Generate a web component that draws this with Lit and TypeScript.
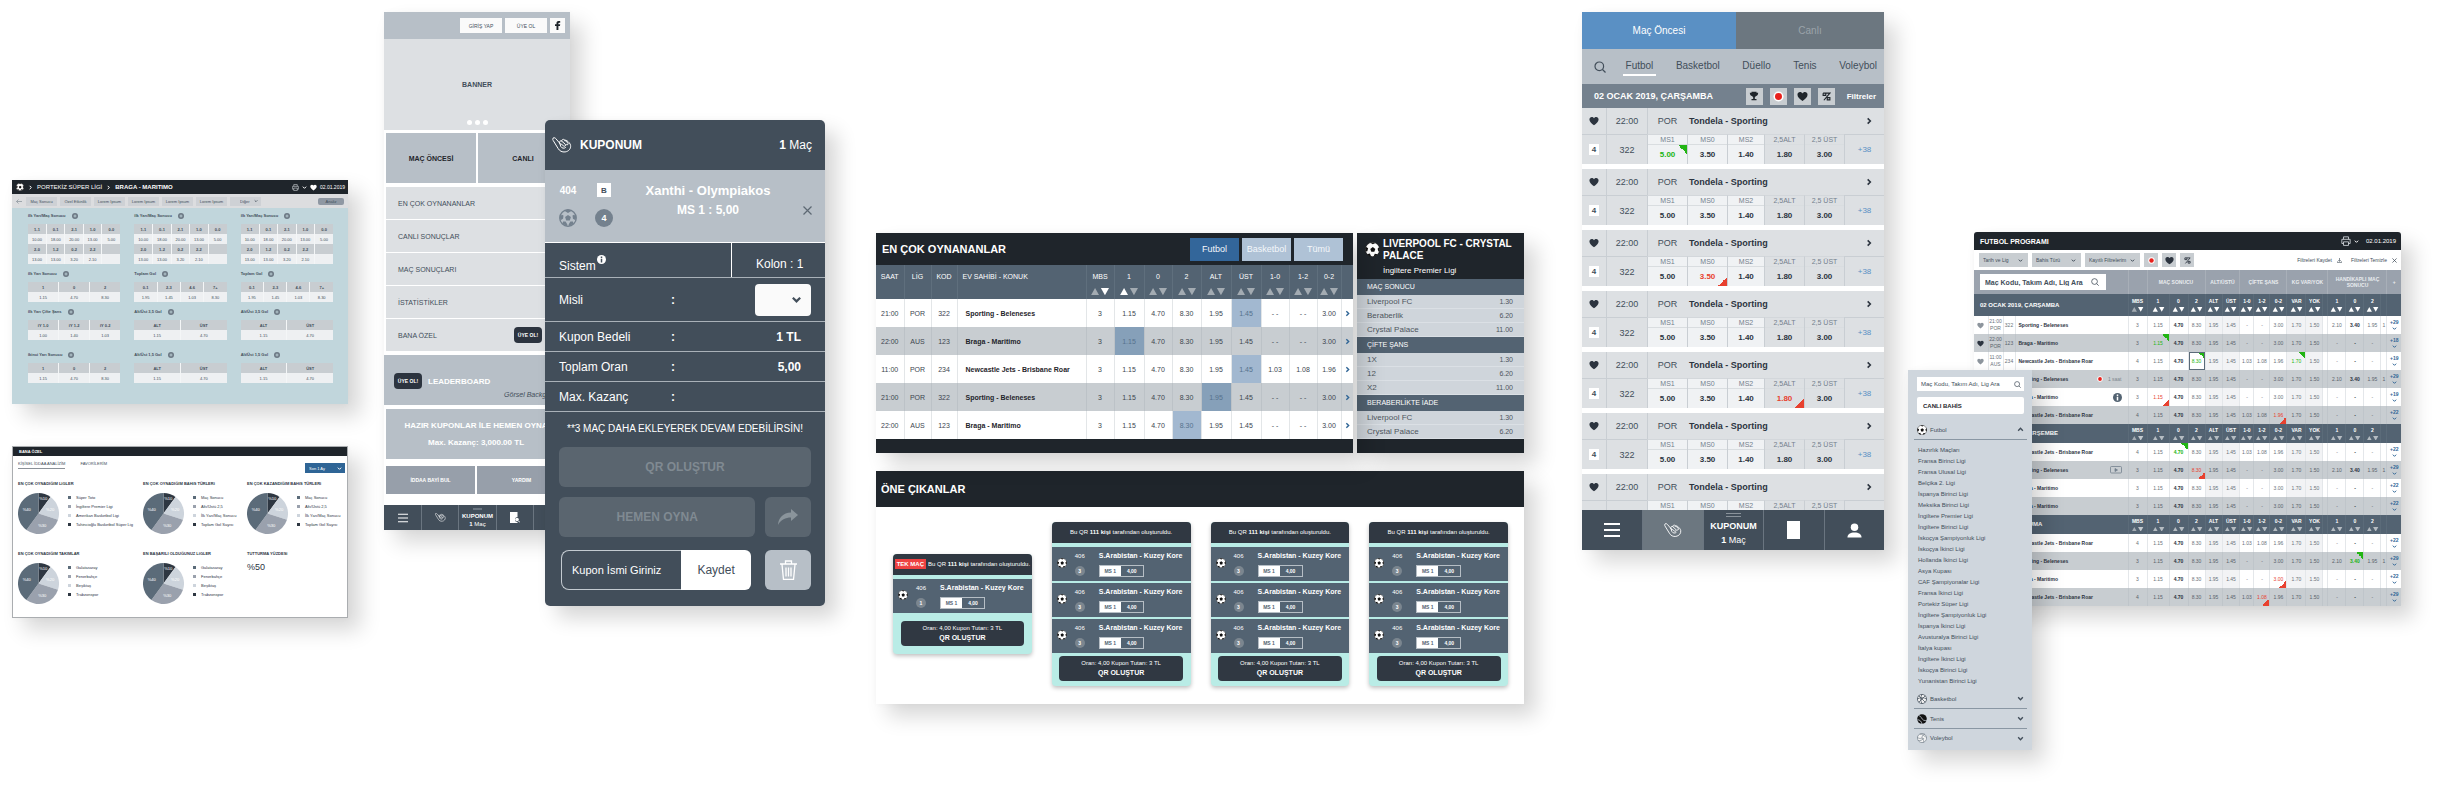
import { LitElement, html, svg, css, nothing } from "lit";
import { customElement, property } from "lit/decorators.js";
import { classMap } from "lit/directives/class-map.js";

const base = css`
  :host {
    --ink: #1f252b;
    --slate: #424e5a;
    --steel: #536372;
    --silver: #b7bfc7;
    --mist: #dde0e3;
    --row: #c8cdd1;
    --blue: #2f6596;
    display: block;
    font-family: "Liberation Sans", Arial, Helvetica, sans-serif;
    color: var(--slate);
  }
  * { box-sizing: border-box; }
  h2, h3, p, ul, dl, dd { margin: 0; padding: 0; font-size: inherit; font-weight: inherit; }
  ul { list-style: none; }
  button, input, select {
    font: inherit; color: inherit; border: 0; margin: 0; padding: 0;
    background: none; border-radius: 0; appearance: none; min-width: 0; outline: 0;
  }
  button { cursor: pointer; text-align: center; }
  input::placeholder { color: inherit; opacity: 1; }
  a { color: inherit; text-decoration: none; }
  svg { display: block; flex: none; }
  table { border-collapse: collapse; table-layout: fixed; width: 100%; }
  th, td { padding: 0; font-weight: 400; text-align: center; }
  .drop { display: grid; align-items: center; }
  .drop > select { grid-area: 1 / 1; width: 100%; height: 100%; }
  .drop > svg { grid-area: 1 / 1; justify-self: end; pointer-events: none; }
`;

const board = css`
  :host { box-shadow: 12px 12px 20px rgba(0, 0, 0, 0.16), 0 0 6px rgba(0, 0, 0, 0.03); }
`;

/* ---------- icons ---------- */

const ball = (size: number) => html`<svg width=${size} height=${size} viewBox="0 0 24 24">
  <circle cx="12" cy="12" r="11.500" fill="#fff" stroke="#111" stroke-width="1"/>
  <path fill="#111" d="M12.500 8l4 3-1.600 4.600h-4.800L8.500 11zM8.500 1.200L12.500 3.400l4-1.900A12 12 0 0 0 8.500 1.200zM22.800 8l-2.600 2.600 1.200 4.400 1.800-.6A12 12 0 0 0 22.800 8zM20.300 19.500l-4.600-.6-2 4.100a12 12 0 0 0 6.600-3.500zM3.200 19.500l4.600-1 2 4.600a12 12 0 0 1-6.600-3.600zM1.300 7.500l3.700 2.400-1.300 4.800-2.600.5A12 12 0 0 1 1.300 7.500z"/>
</svg>`;

const ballGrey = html`<svg width="18" height="18" viewBox="0 0 24 24">
  <circle cx="12" cy="12" r="11" fill="none" stroke="#74818e" stroke-width="1.800"/>
  <path fill="#74818e" d="M12 8l3.900 2.800-1.500 4.500H9.600l-1.500-4.500zM7 2.300l5 3 5-3L14 1h-4zM1 10l3-2.500 2 1-.6 4.600L2 15zM23 10l-3-2.500-2 1 .6 4.600L22 15zM4.500 19.500l1-2.700 3.300-.1 2.400 3.800-.8 2.300zM19.500 19.500l-1-2.700-3.300-.1-2.400 3.800.8 2.300z"/>
</svg>`;

const hand = (w: number) => html`<svg width=${w} height=${w * 0.8} viewBox="0 0 30 24" fill="none" stroke="#fff" stroke-width="1.500" stroke-linecap="round" stroke-linejoin="round">
  <path d="M2 1.500C.600 2.500 1 4 1.700 5.100L9 17c2.200 4 6.200 6 10.700 5.400 5.600-.800 8.800-5 8.200-9.600-.4-3-3-5.400-5.600-7.300-1.700-1.200-3.300-.8-4 .3"/>
  <path d="M2 1.500c1.300-.9 2.700-.3 3.600.8l7.600 8.900"/>
  <path d="M11.300 9c-.7-2 1-3.900 2.900-3.100l5.600 4.900c1.700 1.600-.4 4-2.100 2.800l-3.400-2.700"/>
  <path d="M14.500 6c0-2.300 2.300-3.200 3.900-1.900l5.300 4.700c1.500 1.500-.2 3.700-1.900 2.900M11.500 9l1.700 5.300c1.500 2.700 5 3.300 7 1.600"/>
</svg>`;

const chevron = (dir: "down" | "up" | "right", size: number, width = 2.4) => {
  const d = { down: "M2 4l4 4 4-4", up: "M2 8l4-4 4 4", right: "M4 2l4 4-4 4" }[dir];
  return html`<svg width=${size} height=${size} viewBox="0 0 12 12" fill="none" stroke="currentColor" stroke-width=${width}><path d=${d}/></svg>`;
};

const heart = (size: number) => html`<svg width=${size} height=${size} viewBox="0 0 12 12"><path fill="currentColor" d="M6 11C3 9 .500 6.800.500 4.200.500 2.400 1.800 1.200 3.300 1.200c1.100 0 2.100.6 2.700 1.500.600-.9 1.600-1.500 2.700-1.500 1.500 0 2.800 1.200 2.800 3C11.500 6.800 9 9 6 11z"/></svg>`;

const lens = (size: number) => html`<svg width=${size} height=${size} viewBox="0 0 12 12" fill="none" stroke="currentColor" stroke-width="1.200"><circle cx="5.300" cy="5.300" r="4.300"/><path d="M8.500 8.500l3 3"/></svg>`;

const printer = (size: number) => html`<svg width=${size} height=${size} viewBox="0 0 12 12" fill="none" stroke="#d5dade" stroke-width="1"><path d="M3 4V1h6v3M3 9H1V4h10v5H9M3 7h6v4.300H3z"/></svg>`;

const percent = (size: number) => html`<svg width=${size} height=${size} viewBox="0 0 12 12" fill="none" stroke="currentColor" stroke-width="1.500"><path d="M1.500 1.500h9L2.500 11M1.500 1.500v3h3.500v-3M7 7.500h3.500v3H7z"/></svg>`;

const record = (size: number) => html`<svg width=${size} height=${size} viewBox="0 0 12 12"><circle cx="6" cy="6" r="5.500" fill="#fff"/><circle cx="6" cy="6" r="3.800" fill="#e8201c"/></svg>`;

const trophy = (size: number) => html`<svg width=${size} height=${size} viewBox="0 0 12 12"><path fill="currentColor" d="M3 1h6v1h2c0 2.500-1 3.500-2.600 4L7 7.500V9.500h2V11H3V9.500h2v-2L3.600 6C2 5.500 1 4.500 1 2h2z"/></svg>`;

const burger = (size: number) => html`<svg width=${size} height=${size} viewBox="0 0 16 16" stroke="#fff" stroke-width="1.800"><path d="M0 2h16M0 8h16M0 14h16"/></svg>`;

const person = (size: number) => html`<svg width=${size} height=${size} viewBox="0 0 16 16" fill="#fff"><circle cx="8" cy="4.500" r="4"/><path d="M.500 15.500c0-4 3-5.500 7.500-5.500s7.500 1.500 7.500 5.500z"/></svg>`;

const sorter = (w: number, up: string, down: string) => html`<svg width=${w} height=${w * 0.36} viewBox="0 0 22 8"><path fill=${up} d="M1 8l4.500-8L10 8z"/><path fill=${down} d="M12 0h9l-4.500 8z"/></svg>`;

const plusDot = html`<svg width="6" height="6" viewBox="0 0 12 12"><circle cx="6" cy="6" r="6" fill="#6c7884"/><path d="M6 3v6M3 6h6" stroke="#c1d6dc" stroke-width="1.600"/></svg>`;

/* ---------- match detail: odds markets ---------- */

interface Market { title: string; rows: string[][]; }
const firstHalf: Market = {
  title: "İlk Yarı/Maç Sonucu",
  rows: [["1-1", "0-1", "2-1", "1-0", "0-0"], ["10.00", "18.00", "20.00", "13.00", "5.00"], ["2-0", "1-2", "0-2", "2-2", ""], ["13.00", "13.00", "3.20", "2.10", ""]],
};
const altUst = (n: string): Market => ({ title: `Alt/Üst ${n} Gol`, rows: [["ALT", "ÜST"], ["1.15", "4.70"]] });
const toplam: Market = { title: "Toplam Gol", rows: [["0-1", "2-3", "4-6", "7+"], ["1.95", "1.45", "1.03", "8.30"]] };
const result = (title: string): Market => ({ title, rows: [["1", "0", "2"], ["1.15", "4.70", "8.30"]] });
const markets: Market[] = [
  firstHalf, firstHalf, firstHalf,
  result("İlk Yarı Sonucu"), toplam, toplam,
  { title: "İlk Yarı Çifte Şans", rows: [["İY 1-0", "İY 1-2", "İY 0-2"], ["1.00", "1.40", "1.03"]] }, altUst("3,5"), altUst("3,5"),
  result("İkinci Yarı Sonucu"), altUst("1,5"), altUst("1,5"),
];

@customElement("odds-board")
class OddsBoard extends LitElement {
  static styles = [base, board, css`
    :host { font-size: 4px; background: #c1d6dc; }
    header { display: flex; align-items: center; gap: 4px; height: 14px; padding: 0 3px 0 4px; background: var(--ink); color: #fff; font-size: 6px; }
    header .tools { display: flex; align-items: center; gap: 3px; margin-left: auto; font-size: 5px; }
    nav { display: flex; align-items: center; gap: 3px; height: 14px; padding: 0 4px; background: #dcdddf; }
    nav .tab { flex: 0 1 31px; height: 9px; background: #ced1d5; white-space: nowrap; }
    nav .back { width: 7px; margin-right: 0; color: #8b949c; }
    nav .drop { flex: 0 1 31px; height: 9px; background: #ced1d5; padding-right: 3px; }
    nav .drop select { padding-left: 10px; }
    nav .analyse { width: 26px; height: 7px; margin-left: auto; border-radius: 2px; background: #8f98a3; color: var(--slate); }
    .markets { display: grid; grid-template-columns: repeat(3, minmax(0, 1fr)); grid-template-rows: 58px 38px 43px 33px; column-gap: 14px; padding: 3px 15px 21px 16px; }
    h3 { display: flex; align-items: center; gap: 6px; height: 10px; margin-bottom: 3px; font-weight: 700; line-height: 10px; }
    th, td { height: 10px; line-height: 9px; border-left: 1px solid #f4f6f7; }
    th:first-child, td:first-child { border-left: 0; }
    th { background: var(--row); font-weight: 700; }
    td { background: #eef0f2; }
  `];
  render() {
    return html`
      <header>${ball(8)}${chevron("right", 5)}<span>PORTEKİZ SÜPER LİGİ</span>${chevron("right", 5)}<b>BRAGA - MARITIMO</b>
        <span class="tools">${printer(7)}${chevron("down", 5)}${heart(7)}<span>02.01.2019</span></span></header>
      <nav>
        <button class="back" aria-label="Geri"><svg width="6" height="5" viewBox="0 0 12 10" fill="none" stroke="currentColor" stroke-width="1.500"><path d="M5 1L1 5l4 4M1 5h11"/></svg></button>
        ${["Maç Sonucu", "Özel Etkinlik", "Lorem Ipsum", "Lorem Ipsum", "Lorem Ipsum", "Lorem Ipsum"].map((t) => html`<button class="tab">${t}</button>`)}
        <label class="drop"><select aria-label="Diğer"><option>Diğer</option></select>${chevron("down", 4)}</label>
        <button class="analyse">Analiz</button>
      </nav>
      <div class="markets">${markets.map((m) => html`<section><h3>${m.title}${plusDot}</h3>
        <table>${m.rows.map((r, i) => html`<tr>${r.map((c) => i % 2 ? html`<td>${c}</td>` : html`<th>${c}</th>`)}</tr>`)}</table></section>`)}
      </div>`;
  }
}

/* ---------- personal statistics ---------- */

const shades = ["#5b6b79", "#9aa1ad", "#cdd4dc", "#2e3742"];
const slices = [{ v: 10, c: shades[3] }, { v: 20, c: shades[2] }, { v: 30, c: shades[1] }, { v: 40, c: shades[0] }];

function pie() {
  let at = 0;
  const point = (pct: number, r: number) => {
    const a = (pct / 100) * Math.PI * 2;
    return [Math.sin(a) * r, -Math.cos(a) * r];
  };
  return html`<svg width="41" height="41" viewBox="-50 -50 100 100">${slices.map(({ v, c }) => {
    const [x1, y1] = point(at, 50);
    const [x2, y2] = point(at + v, 50);
    const [tx, ty] = point(at + v / 2, v === 10 ? 38 : 30);
    at += v;
    return svg`<path fill=${c} d="M0 0L${x1} ${y1}A50 50 0 0 1 ${x2} ${y2}z"/><text x=${tx} y=${ty + 4} fill="#fff" font-size="10" text-anchor="middle">%${v}</text>`;
  })}</svg>`;
}

const types = ["Maç Sonucu", "Altı/Üstü 2,5", "İlk Yarı/Maç Sonucu", "Toplam Gol Sayısı"];
const teams = ["Galatasaray", "Fenerbahçe", "Beşiktaş", "Trabzonspor"];
const charts: [string, string[]][] = [
  ["EN ÇOK OYNADIĞIM LİGLER", ["Süper Toto", "İngiltere Premier Ligi", "Amerikan Basketbol Ligi", "Tahincioğlu Basketbol Süper Lig"]],
  ["EN ÇOK OYNADIĞIM BAHİS TÜRLERİ", types],
  ["EN ÇOK KAZANDIĞIM BAHİS TÜRLERİ", types],
  ["EN ÇOK OYNADIĞIM TAKIMLAR", teams],
  ["EN BAŞARILI OLDUĞUNUZ LİGLER", teams],
];

@customElement("stats-board")
class StatsBoard extends LitElement {
  static styles = [base, board, css`
    :host { font-size: 4px; background: #fff; border: 1px solid #aaadb0; }
    header { height: 9px; padding-left: 6px; background: var(--ink); color: #fff; font-weight: 700; line-height: 9px; }
    nav { display: flex; align-items: flex-start; gap: 15px; height: 24px; padding: 4px 2px 0 5px; }
    nav a { line-height: 8px; }
    nav a.on { border-bottom: 1px solid #8b9198; }
    nav .drop { width: 40px; height: 10px; margin: 3px 0 0 auto; padding-right: 3px; background: var(--blue); color: #fff; }
    nav .drop select { padding-left: 4px; }
    .charts { display: grid; grid-template-columns: 125fr 104fr 100fr; grid-template-rows: 70px 67px; padding-left: 5px; color: #2c343f; }
    h3 { line-height: 8px; margin-bottom: 5px; font-weight: 700; white-space: nowrap; }
    .chart { display: flex; gap: 9px; }
    li { display: flex; align-items: center; gap: 5px; height: 9px; line-height: 9px; white-space: nowrap; }
    li i { width: 3px; height: 3px; }
    .rate { font-size: 9px; line-height: 9px; }
  `];
  render() {
    return html`
      <header>BANA ÖZEL</header>
      <nav><a class="on" href="#analiz">KİŞİSEL İDDAA ANALİZİM</a><a href="#favori">FAVORİLERİM</a>
        <label class="drop"><select aria-label="Dönem"><option>Son 1 Ay</option></select>${chevron("down", 5)}</label></nav>
      <div class="charts">
        ${charts.map(([title, items]) => html`<section><h3>${title}</h3><div class="chart">${pie()}
          <ul>${items.map((t, i) => html`<li><i style="background:${shades[i]}"></i>${t}</li>`)}</ul></div></section>`)}
        <section><h3>TUTTURMA YÜZDESİ</h3><p class="rate">%50</p></section>
      </div>`;
  }
}

/* ---------- bottom navigation of the phone screens ---------- */

@customElement("tab-dock")
class TabDock extends LitElement {
  @property({ type: Boolean, reflect: true }) large = false;
  static styles = [base, css`
    nav { display: grid; grid-template-columns: repeat(5, minmax(0, 1fr)); height: 25px; background: var(--slate); color: #fff; font-size: 6px; line-height: 8px; }
    a { display: flex; flex-direction: column; align-items: center; justify-content: center; border-left: 1px solid #6a7580; }
    a:first-child { border-left: 0; }
    .grip { width: 9px; height: 2px; margin-bottom: 2px; background: #6a7580; }
    :host([large]) nav { height: 40px; font-size: 9px; line-height: 14px; }
    :host([large]) .play { background: #6c7780; }
    :host([large]) .grip { width: 15px; height: 4px; margin-bottom: 2px; background: none; border: solid #8a939b; border-width: 1px 0; }
  `];
  render() {
    const k = this.large;
    return html`<nav>
      <a href="#menu" aria-label="Menü">${burger(k ? 16 : 10)}</a>
      <a href="#oyna" class="play" aria-label="Oyna">${hand(k ? 18 : 11)}</a>
      <a href="#kupon"><span class="grip"></span><b>KUPONUM</b><span><b>1</b> Maç</span></a>
      <a href="#kuponlar" aria-label="Kuponlar">${k
        ? html`<svg width="13" height="18" viewBox="0 0 13 18"><path fill="#fff" d="M0 0h13v18H0z"/></svg>`
        : html`<svg width="10" height="11" viewBox="0 0 10 11"><path fill="#fff" d="M0 0h7.500v5a2.500 2.500 0 0 0 0 5v1H0z"/><circle cx="7" cy="7.500" r="1.800" fill="#fff"/><path d="M8.200 8.700L10 10.500" stroke="#fff"/></svg>`}</a>
      <a href="#hesap" aria-label="Hesap">${person(k ? 15 : 9)}</a></nav>`;
  }
}

/* ---------- phone home screen ---------- */

@customElement("home-board")
class HomeBoard extends LitElement {
  static styles = [base, board, css`
    :host { background: #fff; font-size: 7px; }
    header { display: flex; justify-content: flex-end; align-items: center; gap: 3px; height: 27px; padding-right: 5px; background: var(--silver); font-size: 5px; }
    header button { width: 42px; height: 15px; background: #fafafa; }
    header .fb { display: grid; place-items: center; width: 15px; color: var(--ink); }
    .banner { display: grid; grid-template-rows: 1fr auto; justify-items: center; align-items: center; height: 91px; padding: 10px 0 5px; background: var(--mist); font-weight: 700; }
    .dots { display: flex; gap: 3px; }
    .dots i { width: 5px; height: 5px; border-radius: 50%; background: #fff; }
    .pair { display: grid; grid-template-columns: 1fr 1fr; gap: 2px; padding: 3px 2px 0; }
    .pair button { height: 50px; background: var(--silver); font-weight: 700; color: var(--ink); }
    .list { display: grid; gap: 1px; padding: 4px 2px; }
    .list a { display: flex; justify-content: space-between; align-items: center; height: 32px; padding: 0 26px 0 12px; background: var(--mist); }
    .pill { display: grid; place-items: center; width: 28px; height: 16px; border-radius: 4px; background: #2c343f; color: #fff; font-size: 5px; font-weight: 700; }
    .leader { display: grid; grid-template-columns: auto 1fr; align-content: end; align-items: center; column-gap: 6px; height: 50px; padding: 0 6px 4px 10px; background: var(--silver); color: #fff; }
    .leader b { font-size: 8px; }
    .leader em { grid-column: 1 / 3; justify-self: end; line-height: 12px; color: var(--slate); }
    .ready { display: grid; place-content: center; justify-items: center; gap: 5px; height: 50px; margin: 4px 4px 4px 2px; background: var(--silver); color: #fff; font-size: 8px; font-weight: 700; line-height: 12px; white-space: nowrap; }
    .links { padding: 3px 4px 11px 2px; }
    .links button { height: 28px; background: #979faa; color: #fff; font-size: 5px; }
  `];
  render() {
    return html`
      <header><button>GİRİŞ YAP</button><button>ÜYE OL</button><button class="fb" aria-label="Facebook"><svg width="6" height="9" viewBox="0 0 6 9"><path fill="currentColor" d="M1.500 9V5H0V3.300h1.500V2C1.500.7 2.300 0 3.600 0H5.200v1.700H4.100c-.5 0-.7.2-.7.7v.9h1.800L5 5H3.400v4z"/></svg></button></header>
      <div class="banner"><span>BANNER</span><span class="dots"><i></i><i></i><i></i></span></div>
      <div class="pair"><button>MAÇ ÖNCESİ</button><button>CANLI</button></div>
      <nav class="list">${["EN ÇOK OYNANANLAR", "CANLI SONUÇLAR", "MAÇ SONUÇLARI", "İSTATİSTİKLER", "BANA ÖZEL"].map((t, i) => html`<a href="#liste">${t}${i === 4 ? html`<span class="pill">ÜYE OL!</span>` : nothing}</a>`)}</nav>
      <div class="leader"><span class="pill">ÜYE OL!</span><b>LEADERBOARD</b><em>Görsel Background</em></div>
      <div class="ready"><span>HAZIR KUPONLAR İLE HEMEN OYNA</span><span>Max. Kazanç: 3,000.00 TL</span></div>
      <div class="pair links"><button>İDDAA BAYİ BUL</button><button>YARDIM</button></div>
      <tab-dock></tab-dock>`;
  }
}

/* ---------- coupon ---------- */

@customElement("coupon-board")
class CouponBoard extends LitElement {
  static styles = [base, board, css`
    :host { background: var(--slate); color: #fff; font-size: 12px; border-radius: 5px; }
    header { display: flex; align-items: center; gap: 8px; height: 50px; padding: 0 13px 0 7px; }
    header span { margin-left: auto; }
    .pick { display: grid; grid-template-columns: 18px 18px 1fr 9px; column-gap: 18px; grid-template-rows: 28px 28px; align-items: center; justify-items: center; height: 72px; padding: 6px 13px 0 14px; background: var(--silver); font-weight: 700; }
    .code { font-size: 10px; }
    .bank { display: grid; place-items: center; width: 14px; height: 14px; background: #fff; color: var(--slate); font-size: 8px; }
    .mbs { grid-area: 2 / 2; display: grid; place-items: center; width: 18px; height: 18px; border-radius: 50%; background: #74818e; font-size: 9px; }
    .game { grid-area: 1 / 3; font-size: 13px; white-space: nowrap; }
    .odd { grid-area: 2 / 3; align-self: start; line-height: 12px; }
    .pick > svg { grid-area: 2 / 1; }
    .pick button { grid-area: 2 / 4; align-self: start; padding-top: 2px; }
    .line { display: grid; grid-template-columns: 112px 1fr auto; align-items: center; height: 30px; padding: 0 24px 0 14px; border-top: 1px solid #a9b1b8; }
    .line.system { height: 35px; padding-right: 0; grid-template-columns: 1fr 94px; grid-template-rows: 34px; border-color: #fff; }
    .system span { display: flex; gap: 1px; align-items: center; padding-top: 12px; }
    .system svg { margin-top: -14px; }
    .system p { height: 34px; padding-left: 24px; border-left: 1px solid #fff; line-height: 42px; }
    .line.times { height: 44px; padding-right: 14px; }
    .drop { width: 56px; height: 32px; padding-right: 9px; border-radius: 4px; background: #fafafa; color: var(--slate); }
    .note { padding: 9px 0 10px; border-top: 1px solid #a9b1b8; text-align: center; font-size: 10px; line-height: 16px; }
    .acts { display: grid; grid-template-columns: 189fr 53fr; gap: 10px; padding: 0 14px 16px; }
    .acts button { display: grid; place-items: center; height: 40px; border-radius: 6px; background: #5a656f; color: #808a92; font-weight: 700; }
    .wide { grid-column: 1 / 3; }
    .save { display: flex; height: 40px; margin: 3px 4px 0 2px; }
    .save input { flex: 111; padding-left: 10px; border: 1px solid #c3cad0; border-right: 0; border-radius: 8px 0 0 8px; font-size: 11px; }
    .acts .save button { display: block; flex: 72; border-radius: 0 6px 6px 0; background: #fff; color: var(--slate); font-weight: 400; }
    .acts .bin { margin-top: 3px; background: var(--silver); }
  `];
  render() {
    return html`
      <header>${hand(20)}<b>KUPONUM</b><span><b>1</b> Maç</span></header>
      <div class="pick"><span class="code">404</span><span class="bank">B</span><span class="game">Xanthi - Olympiakos</span>
        ${ballGrey}<span class="mbs">4</span><span class="odd">MS 1 : 5,00</span>
        <button aria-label="Sil"><svg width="9" height="9" viewBox="0 0 9 9" stroke="#5d6873" stroke-width="1.200"><path d="M.500.500l8 8M8.500.500l-8 8"/></svg></button></div>
      <div class="line system"><span>Sistem<svg width="9" height="9" viewBox="0 0 12 12"><circle cx="6" cy="6" r="6" fill="#fff"/><path d="M6 2v2M6 5v5" stroke="#424e5a" stroke-width="2"/></svg></span><p>Kolon : 1</p></div>
      <div class="line times"><label for="misli">Misli</label><b>:</b><span class="drop"><select id="misli"><option></option></select>${chevron("down", 11)}</span></div>
      <div class="line"><span>Kupon Bedeli</span><b>:</b><b>1 TL</b></div>
      <div class="line"><span>Toplam Oran</span><b>:</b><b>5,00</b></div>
      <div class="line"><span>Max. Kazanç</span><b>:</b></div>
      <p class="note">**3 MAÇ DAHA EKLEYEREK DEVAM EDEBİLİRSİN!</p>
      <div class="acts">
        <button class="wide">QR OLUŞTUR</button>
        <button>HEMEN OYNA</button>
        <button aria-label="Paylaş"><svg width="20" height="16" viewBox="0 0 20 16"><path fill="#8a949b" d="M13 0l7 6-7 6V8.500C7.500 8.500 3 10.500 0 16 .500 8.500 5 4 13 3.500z"/></svg></button>
        <div class="save"><input aria-label="Kupon İsmi" placeholder="Kupon İsmi Giriniz"><button>Kaydet</button></div>
        <button class="bin" aria-label="Kuponu sil"><svg width="17" height="20" viewBox="0 0 17 20" fill="none" stroke="#fff" stroke-width="1.300"><path d="M0 4h17M5.500 3.500V1h6v2.500M2 4.500l1.500 15h10L15 4.500M6 7.500v9M8.500 7.500v9M11 7.500v9"/></svg></button>
      </div>`;
  }
}

/* ---------- most played ---------- */

const playedHeads = ["SAAT", "LİG", "KOD", "EV SAHİBİ - KONUK", "MBS", "1", "0", "2", "ALT", "ÜST", "1-0", "1-2", "0-2", ""];
const playedWidths = [28, 27, 26, 129, 28, 30, 28, 29, 30, 30, 28, 28, 24, 12];
const noDc = ["- -", "- -", "3.00"];
const played: { cells: string[]; hot: Record<number, string> }[] = [
  { cells: ["21:00", "POR", "322", "Sporting - Beleneses", "3", "1.15", "4.70", "8.30", "1.95", "1.45", ...noDc], hot: { 9: "soft" } },
  { cells: ["22:00", "AUS", "123", "Braga - Maritimo", "3", "1.15", "4.70", "8.30", "1.95", "1.45", ...noDc], hot: { 5: "deep" } },
  { cells: ["11:00", "POR", "234", "Newcastle Jets - Brisbane Roar", "3", "1.15", "4.70", "8.30", "1.95", "1.45", "1.03", "1.08", "1.96"], hot: { 9: "soft" } },
  { cells: ["21:00", "POR", "322", "Sporting - Beleneses", "3", "1.15", "4.70", "8.30", "1.95", "1.45", ...noDc], hot: { 8: "deep" } },
  { cells: ["22:00", "AUS", "123", "Braga - Maritimo", "3", "1.15", "4.70", "8.30", "1.95", "1.45", ...noDc], hot: { 7: "soft" } },
];
const sideGroups: [string, [string, string][]][] = [
  ["MAÇ SONUCU", [["Liverpool FC", "1.30"], ["Beraberlik", "6.20"], ["Crystal Palace", "11.00"]]],
  ["ÇİFTE ŞANS", [["1X", "1.30"], ["12", "6.20"], ["X2", "11.00"]]],
  ["BERABERLİKTE İADE", [["Liverpool FC", "1.30"], ["Crystal Palace", "6.20"]]],
];

@customElement("played-board")
class PlayedBoard extends LitElement {
  static styles = [base, css`
    :host { display: flex; gap: 4px; font-size: 7px; }
    section, aside { box-shadow: 12px 12px 20px rgba(0, 0, 0, 0.16), 0 0 6px rgba(0, 0, 0, 0.03); }
    section { flex: 477 1 0; min-width: 0; padding-bottom: 14px; background: var(--ink); position: relative; }
    aside { flex: 167 1 0; min-width: 0; padding-bottom: 14px; background: var(--ink); }
    header { display: flex; align-items: center; gap: 3px; height: 32px; padding: 0 10px 0 6px; color: #fff; }
    h2 { margin-right: auto; font-size: 11px; font-weight: 700; }
    header button { width: 49px; height: 23px; background: #afc2d6; color: #f4f7fa; font-size: 9px; }
    header button.on { background: #33669a; }
    th { height: 34px; padding-top: 6px; vertical-align: top; background: var(--steel); color: #fff; border-left: 1px solid #5f6f7d; line-height: 12px; }
    th svg { margin: 5px auto 0; }
    td { height: 28px; background: #fff; border-left: 1px solid #e3e6e8; color: #3d464f; }
    tr:nth-child(even) td { background: var(--row); border-left-color: #bcc2c7; }
    .name { text-align: left; padding-left: 8px; color: var(--ink); white-space: nowrap; }
    th.name { padding-left: 5px; color: #fff; }
    td.name { font-weight: 700; }
    th:first-child, td:first-child { border-left: 0; }
    tr td.deep, tr:nth-child(even) td.deep { background: #86a0b9; color: #56728d; }
    tr td.soft { background: #a2b8d0; color: #56728d; }
    .go { color: var(--blue); }
    .go svg { margin: auto; }
    .top { display: grid; grid-template-columns: 15px 1fr; column-gap: 3px; height: 46px; padding: 5px 0 0 8px; color: #fff; }
    .top > svg { margin-top: 4px; }
    .top b { font-size: 10px; line-height: 12px; }
    .top p { grid-column: 2; font-size: 8px; line-height: 12px; }
    h3 { height: 16px; padding-left: 10px; background: var(--steel); color: #fff; line-height: 16px; }
    .bet { display: flex; justify-content: space-between; align-items: center; height: 14px; padding: 0 11px 0 10px; border-bottom: 1px solid #dbe0e5; background: #cfd5db; color: #4e565e; font-size: 8px; }
    .bet span { font-size: 7px; }
  `];
  render() {
    const total = playedWidths.reduce((a, b) => a + b);
    return html`
      <section>
        <header><h2>EN ÇOK OYNANANLAR</h2><button class="on">Futbol</button><button>Basketbol</button><button>Tümü</button></header>
        <table>
          <colgroup>${playedWidths.map((w) => html`<col style="width:${(w / total) * 100}%">`)}</colgroup>
          <thead><tr>${playedHeads.map((h, i) => html`<th class=${classMap({ name: i === 3 })}>${h}${i > 3 && h ? sorter(20, i === 5 ? "#fff" : "#a3abb2", i === 4 ? "#fff" : "#a3abb2") : nothing}</th>`)}</tr></thead>
          <tbody>${played.map((r) => html`<tr>${r.cells.map((c, i) => html`<td class="${i === 3 ? "name" : ""} ${r.hot[i] ?? ""}">${c}</td>`)}<td class="go">${chevron("right", 7)}</td></tr>`)}</tbody>
        </table>
      </section>
      <aside>
        <div class="top">${ball(15)}<b>LIVERPOOL FC - CRYSTAL PALACE</b><p>İngiltere Premier Ligi</p></div>
        ${sideGroups.map(([t, rows]) => html`<h3>${t}</h3>${rows.map(([n, v]) => html`<div class="bet">${n}<span>${v}</span></div>`)}`)}
      </aside>`;
  }
}

/* ---------- featured coupons ---------- */

@customElement("featured-board")
class FeaturedBoard extends LitElement {
  static styles = [base, board, css`
    :host { background: #fff; font-size: 6px; }
    header { height: 36px; padding-left: 5px; background: var(--ink); color: #fff; font-size: 11px; font-weight: 700; line-height: 36px; }
    .cards { display: grid; grid-template-columns: repeat(4, minmax(0, 1fr)); align-items: center; column-gap: 20px; height: 197px; padding: 0 16px 4px 17px; }
    article { border-radius: 4px; overflow: hidden; background: #b9ece6; color: #fff; box-shadow: 0 2px 4px rgba(0, 0, 0, 0.25); }
    h3 { display: flex; justify-content: center; align-items: center; gap: 2px; height: 21px; margin-bottom: 4px; background: #303842; white-space: nowrap; }
    h3 mark { padding: 2px; background: #ee4141; color: #fff; font-weight: 700; }
    .game { display: grid; grid-template-columns: 12px 24px 1fr; grid-template-rows: 16px 14px; align-items: center; justify-items: center; height: 34px; margin-bottom: 2px; padding: 1px 0 3px 4px; background: var(--steel); }
    .game > svg { grid-area: 1 / 1 / 3 / 2; }
    .mbs { grid-area: 2 / 2; display: grid; place-items: center; width: 10px; height: 10px; border-radius: 50%; background: #7b868f; font-size: 5px; font-weight: 700; }
    .name { justify-self: start; padding-left: 7px; font-size: 7px; font-weight: 700; white-space: nowrap; }
    .chip { grid-area: 2 / 3; justify-self: start; display: grid; grid-template-columns: 21px 22px; height: 12px; margin-left: 7px; border: 1px solid #b6bec5; font-size: 5px; font-weight: 700; line-height: 10px; text-align: center; }
    .chip b { background: #fff; color: var(--steel); }
    article button { display: block; width: calc(100% - 15px); height: 25px; margin: 3px auto 5px; border-radius: 4px; background: #303842; line-height: 9px; white-space: nowrap; }
    article button b { display: block; font-size: 7px; }
    .single button { margin: 8px auto; }
  `];
  render() {
    const card = (n: number) => html`<article class=${classMap({ single: n === 1 })}>
      <h3>${n === 1 ? html`<mark>TEK MAÇ</mark>` : nothing}<span>Bu QR <b>111 kişi</b> tarafından oluşturuldu.</span></h3>
      ${Array.from({ length: n }, () => html`<div class="game">${ball(10)}<span>406</span><span class="name">S.Arabistan - Kuzey Kore</span><span class="mbs">${n}</span><span class="chip"><b>MS 1</b><span>4,00</span></span></div>`)}
      <button>Oran: 4,00 Kupon Tutarı: 3 TL<b>QR OLUŞTUR</b></button></article>`;
    return html`<header>ÖNE ÇIKANLAR</header><div class="cards">${[1, 3, 3, 3].map(card)}</div>`;
  }
}

/* ---------- phone match list ---------- */

const marks: Record<number, [number, string]> = { 0: [0, "up"], 2: [1, "down"], 4: [3, "down"] };
const bets = [["MS1", "5.00"], ["MS0", "3.50"], ["MS2", "1.40"], ["2,5ALT", "1.80"], ["2,5 ÜST", "3.00"]];
const fullRows = 6;

@customElement("matches-board")
class MatchesBoard extends LitElement {
  static styles = [base, board, css`
    :host { background: #fff; font-size: 9px; }
    .modes { display: grid; grid-template-columns: 154fr 148fr; height: 37px; font-size: 10px; }
    .modes button { background: #6c7780; color: #9ba3aa; }
    .modes .on { background: #5a90c4; color: #fff; }
    .sports { display: flex; justify-content: space-between; align-items: center; height: 35px; padding: 0 4px 0 12px; background: var(--silver); font-size: 10px; }
    .sports a { padding: 0 3px; line-height: 17px; border-bottom: 2px solid transparent; }
    .sports .on { border-color: #fff; }
    .date { display: flex; align-items: center; gap: 7px; height: 24px; padding: 0 8px 0 12px; background: #74818e; color: #fff; }
    .date b { margin-right: auto; }
    .date button { display: grid; place-items: center; width: 17px; height: 17px; background: var(--row); color: var(--ink); }
    .date a { padding-left: 5px; font-size: 8px; font-weight: 700; }
    .match { display: grid; grid-template-columns: 24fr 41fr 40fr 40fr 37fr 40fr 40fr 40fr; grid-template-rows: 26px 30px; margin-bottom: 5px; background: var(--mist); }
    .match.peek { grid-template-rows: 26px 10px; margin: 0; }
    .match > * { display: grid; place-items: center; min-width: 0; border-left: 1px solid #c9ced3; }
    .match > :nth-child(1), .match > .mbs { border-left: 0; }
    .match .game { grid-column: 4 / 8; justify-content: start; border: 0; padding-left: 2px; color: #2c343f; font-weight: 700; }
    .match .go { border: 0; justify-content: end; padding-right: 11px; color: #2c343f; }
    .heart { color: #2c343f; }
    .mbs b { padding: 0 3px; background: #fff; font-size: 8px; line-height: 11px; }
    .match .bet { grid-template-rows: 9px 20px; place-items: stretch; border-top: 1px solid #d3d7db; text-align: center; font-size: 7px; line-height: 9px; color: #74818e; }
    .match.peek .bet { grid-template-rows: 9px; }
    .bet b { border-top: 1px solid #d9dde0; color: #2c343f; font-size: 8px; line-height: 19px; }
    .main { background: #f0f2f4; }
    .bet .up { color: #22b514; background: linear-gradient(to top right, transparent 50%, #22b514 50%) top right / 9px 9px no-repeat; }
    .bet .down { color: #e8412f; background: linear-gradient(to bottom right, transparent 50%, #e8412f 50%) bottom right / 9px 9px no-repeat; }
    .more { color: #5a90c4; font-size: 8px; }
    .mbs, .code, .more { border-top: 1px solid #c9ced3; }
  `];
  private match(r: number) {
    const full = r < fullRows;
    return html`<div class=${classMap({ match: true, peek: !full })}>
      <span class="heart">${heart(10)}</span><span>22:00</span><span>POR</span><span class="game">Tondela - Sporting</span><span class="go">${chevron("right", 8)}</span>
      <span class="mbs">${full ? html`<b>4</b>` : nothing}</span><span class="code">${full ? "322" : nothing}</span>
      ${bets.map(([n, v], i) => html`<span class="bet ${i < 3 ? "main" : ""}"><span>${n}</span>${full ? html`<b class=${marks[r]?.[0] === i ? marks[r][1] : ""}>${v}</b>` : nothing}</span>`)}
      <a class="more" href="#oranlar">${full ? "+38" : nothing}</a></div>`;
  }
  render() {
    return html`
      <div class="modes"><button class="on">Maç Öncesi</button><button>Canlı</button></div>
      <nav class="sports">${lens(12)}${["Futbol", "Basketbol", "Düello", "Tenis", "Voleybol"].map((t, i) => html`<a href="#spor" class=${i ? "" : "on"}>${t}</a>`)}</nav>
      <div class="date"><b>02 OCAK 2019, ÇARŞAMBA</b><button aria-label="Kupa">${trophy(10)}</button><button aria-label="Canlı">${record(11)}</button><button aria-label="Favoriler">${heart(11)}</button><button aria-label="Oran">${percent(9)}</button><a href="#filtre">Filtreler</a></div>
      ${Array.from({ length: fullRows + 1 }, (_, r) => this.match(r))}
      <tab-dock large></tab-dock>`;
  }
}

/* ---------- desktop football programme ---------- */

const progWidths = [14, 15, 12, 113, 19, 22, 19, 17, 17, 18, 14, 16, 17, 19, 17, 5, 18, 18, 17, 6, 14];
const progCols = ["1", "0", "2", "ALT", "ÜST", "1-0", "1-2", "0-2", "VAR", "YOK", "", "1", "0", "2", ""];
const head = ["1.15", "4.70", "8.30", "1.95", "1.45"];
const kinds: Record<string, { name: string; odds: string[] }> = {
  S: { name: "Sporting - Beleneses", odds: [...head, "-", "-", "3.00", "1.70", "1.50", "", "2.10", "3.40", "1.95", "1"] },
  M: { name: "Braga - Maritimo", odds: [...head, "-", "-", "3.00", "1.70", "1.50", "", "-", "-", "-", ""] },
  N: { name: "Newcastle Jets - Brisbane Roar", odds: [...head, "1.03", "1.08", "1.96", "1.70", "1.50", "", "-", "-", "-", ""] },
};
interface Fixture { k: string; time: string; lig: string; code: string; more: string; mark?: Record<number, string>; fav?: boolean; extra?: string; }
const fx = (k: string, time: string, lig: string, code: string, more: string, mark: Record<number, string> = {}, extra = "", fav = false): Fixture => ({ k, time, lig, code, more, mark, extra, fav });
const days: { date: string; rows: Fixture[] }[] = [
  { date: "02 OCAK 2019, ÇARŞAMBA", rows: [
    fx("S", "21:00", "POR", "322", "+29"), fx("M", "22:00", "POR", "123", "+18", { 0: "up" }, "", true),
    fx("N", "11:00", "AUS", "234", "+19", { 2: "up box", 8: "up" }), fx("S", "21:00", "POR", "322", "+29", {}, "live"),
    fx("M", "22:00", "POR", "123", "+19", { 0: "down" }, "info"), fx("N", "11:00", "AUS", "234", "+22", { 7: "down" }),
  ] },
  { date: "03 OCAK 2019, PERŞEMBE", rows: [
    fx("N", "11:00", "AUS", "234", "+22", { 1: "up" }), fx("S", "21:00", "POR", "322", "+29", { 2: "down" }, "tv"),
    fx("M", "22:00", "POR", "123", "+22"), fx("M", "22:00", "POR", "123", "+22"),
  ] },
  { date: "04 OCAK 2019, CUMA", rows: [
    fx("N", "11:00", "AUS", "234", "+22"), fx("S", "21:00", "POR", "322", "+29", { 12: "up" }),
    fx("M", "22:00", "POR", "123", "+22", { 7: "down" }), fx("N", "11:00", "AUS", "234", "+29", { 6: "down" }),
  ] },
];

@customElement("program-board")
class ProgramBoard extends LitElement {
  static styles = [base, board, css`
    :host { background: #fff; font-size: 5px; border-radius: 3px; }
    header { display: flex; align-items: center; gap: 3px; height: 18px; padding: 0 5px 0 6px; border-radius: 3px 3px 0 0; background: var(--ink); color: #fff; font-size: 6px; }
    h2 { margin-right: auto; font-size: 7px; font-weight: 700; }
    header span { padding-left: 4px; }
    .filters { display: flex; align-items: center; gap: 4px; height: 20px; padding: 0 4px 0 5px; }
    .filters .drop { flex: 0 1 49px; height: 14px; padding-right: 5px; background: var(--row); }
    .filters .drop.wide { flex-basis: 55px; }
    .filters select { padding-left: 4px; }
    .filters button { display: grid; place-items: center; width: 14px; height: 14px; background: var(--row); color: #2c343f; }
    .filters a { display: flex; align-items: center; gap: 5px; margin-left: 5px; }
    .filters a.first { margin-left: auto; }
    .find { display: flex; align-items: center; width: 126px; height: 16px; margin-left: 6px; padding: 0 7px 0 5px; background: #fff; color: var(--slate); font-size: 7px; }
    .find input { flex: 1; text-align: left; }
    .groups th { height: 24px; background: #9aa2ad; color: #e9ecef; font-weight: 700; line-height: 6px; border-left: 1px solid #a8afb8; }
    .groups th:first-child { border: 0; }
    .day th { height: 19px; background: var(--steel); color: #fff; font-weight: 700; line-height: 7px; border-left: 1px solid #5b6b79; }
    .day th.date { padding-left: 6px; border: 0; text-align: left; font-size: 6px; }
    .day.first th { height: 22px; }
    .day svg { margin: 2px auto 0; }
    td { height: 18px; line-height: 7px; background: #fff; border-left: 1px solid #e4e7ea; color: #6a727a; overflow: hidden; }
    td:first-child { border: 0; color: #8d959d; }
    td:first-child svg { margin: auto; }
    .pale { background: #f2f3f5; }
    .alt td { background: var(--row); border-left-color: #bfc5ca; color: #59626b; }
    .strong { color: #2c343f !important; font-weight: 700; }
    .name > div { display: flex; align-items: center; justify-content: space-between; padding: 0 6px 0 3px; color: #2c343f; white-space: nowrap; }
    .name > div > span { display: flex; align-items: center; gap: 5px; color: #7d868e; }
    .more { color: var(--blue) !important; font-weight: 700; }
    .more svg { margin: 0 auto; }
    tr td.up { color: #22b514 !important; background-image: linear-gradient(to top right, transparent 50%, #22b514 50%); background-size: 7px 7px; background-repeat: no-repeat; background-position: top right; }
    tr td.down { color: #e8412f !important; background-image: linear-gradient(to bottom right, transparent 50%, #e8412f 50%); background-size: 7px 7px; background-repeat: no-repeat; background-position: bottom right; }
    td.box { box-shadow: inset 0 0 0 1px #5b6b79; }
  `];
  private extra(kind?: string) {
    if (kind === "live") return html`<span>${record(6)}1 saat</span>`;
    if (kind === "info") return html`<span><svg width="9" height="9" viewBox="0 0 12 12"><circle cx="6" cy="6" r="6" fill="#536372"/><path d="M6 2v2M6 5v5" stroke="#fff" stroke-width="2"/></svg></span>`;
    if (kind === "tv") return html`<span><svg width="12" height="8" viewBox="0 0 12 8" fill="none" stroke="#74818e" stroke-width=".800"><rect x=".500" y=".500" width="11" height="6.500" rx="1"/><path fill="#74818e" d="M5 2.500l2.500 1.500L5 5.500z"/></svg></span>`;
    return nothing;
  }
  render() {
    const total = progWidths.reduce((a, b) => a + b);
    return html`
      <header><h2>FUTBOL PROGRAMI</h2>${printer(10)}${chevron("down", 5)}<span>02.01.2019</span></header>
      <div class="filters">
        <label class="drop"><select aria-label="Tarih ve Lig"><option>Tarih ve Lig</option></select>${chevron("down", 5)}</label>
        <label class="drop"><select aria-label="Bahis Türü"><option>Bahis Türü</option></select>${chevron("down", 5)}</label>
        <label class="drop wide"><select aria-label="Kayıtlı Filtrelerim"><option>Kayıtlı Filtrelerim</option></select>${chevron("down", 5)}</label>
        <button aria-label="Canlı">${record(7)}</button><button aria-label="Favoriler">${heart(9)}</button><button aria-label="Oran">${percent(7)}</button>
        <a class="first" href="#kaydet">Filtreleri Kaydet<svg width="5" height="5" viewBox="0 0 12 12" fill="none" stroke="currentColor" stroke-width="1.500"><path d="M6 0v8M3 5l3 3 3-3M1 8v3h10V8"/></svg></a>
        <a href="#temizle">Filtreleri Temizle<svg width="5" height="5" viewBox="0 0 12 12" stroke="currentColor" stroke-width="1.800"><path d="M1 1l10 10M11 1L1 11"/></svg></a>
      </div>
      <table>
        <colgroup>${progWidths.map((w) => html`<col style="width:${(w / total) * 100}%">`)}</colgroup>
        <thead><tr class="groups"><th colspan="4"><label class="find"><input aria-label="Ara" placeholder="Maç Kodu, Takım Adı, Lig Ara">${lens(8)}</label></th><th></th>
          <th colspan="3">MAÇ SONUCU</th><th colspan="2">ALT/ÜSTÜ</th><th colspan="3">ÇİFTE ŞANS</th><th colspan="3">KG VAR/YOK</th><th colspan="4">HANDİKAPLI MAÇ SONUCU</th><th>+</th></tr></thead>
        ${days.map((d, n) => html`<tbody>
          <tr class=${classMap({ day: true, first: n === 0 })}><th class="date" colspan="4">${d.date}</th><th>MBS${sorter(13, "#a3abb2", n ? "#c3c9ce" : "#fff")}</th>
            ${progCols.map((c) => html`<th>${c}${c ? sorter(13, n ? "#b5bcc2" : "#fff", n ? "#b5bcc2" : "#fff") : nothing}</th>`)}<th></th></tr>
          ${d.rows.map((r, i) => html`<tr class=${i % 2 ? "alt" : ""}>
            <td class=${r.fav ? "strong" : ""}>${heart(7)}</td><td>${r.time}<br>${r.lig}</td><td>${r.code}</td>
            <td class="name"><div><b>${kinds[r.k].name}</b>${this.extra(r.extra)}</div></td><td>${r.k === "N" ? 4 : 3}</td>
            ${kinds[r.k].odds.map((o, c) => html`<td class="${c === 1 || c === 12 ? "strong" : ""} ${[3, 4, 8, 9].includes(c) ? "pale" : ""} ${r.mark?.[c] ?? ""}">${o}</td>`)}
            <td class="more">${r.more}${chevron("down", 5)}</td></tr>`)}
        </tbody>`)}
      </table>`;
  }
}

/* ---------- league menu ---------- */

const leagues = ["Hazırlık Maçları", "Fransa Birinci Ligi", "Fransa Ulusal Ligi", "Belçika 2. Ligi", "İspanya Birinci Ligi", "Meksika Birinci Ligi", "İngiltere Premier Ligi", "İngiltere Birinci Ligi", "İskoçya Şampiyonluk Ligi", "İskoçya İkinci Ligi", "Hollanda İkinci Ligi", "Asya Kupası", "CAF Şampiyonalar Ligi", "Fransa İkinci Ligi", "Portekiz Süper Ligi", "İngiltere Şampiyonluk Ligi", "İspanya İkinci Ligi", "Avusturalya Birinci Ligi", "İtalya kupası", "İngiltere İkinci Ligi", "İskoçya Birinci Ligi", "Yunanistan Birinci Ligi"];

const basket = html`<svg width="10" height="10" viewBox="0 0 24 24" fill="none" stroke="#424e5a" stroke-width="1.800"><circle cx="12" cy="12" r="11" fill="#f4f4f4"/><path d="M4 4l16 16M20 4L4 20M12 1c-4 6-4 16 0 22M1 12c6-4 16-4 22 0"/></svg>`;
const tennis = html`<svg width="10" height="10" viewBox="0 0 24 24" fill="none" stroke="#cfd6dd" stroke-width="1.800"><circle cx="12" cy="12" r="11.500" fill="#111" stroke="none"/><path d="M3 3c9 3 7 9 13 12 3 1 6 1 8 0M1 14c5-1 10 4 11 10"/></svg>`;
const volley = html`<svg width="10" height="10" viewBox="0 0 24 24" fill="none" stroke="#6c7884" stroke-width="1.500"><circle cx="12" cy="12" r="11" fill="#f4f4f4"/><path d="M12 12c0-5 3-9 7-9M12 12c-4 2-9 1-11-2M12 12c4 3 5 8 3 11M7 3c5 0 10 2 15 8M3 18c5 1 10-1 14-6"/></svg>`;

@customElement("league-board")
class LeagueBoard extends LitElement {
  static styles = [base, board, css`
    :host { padding: 7px 5px 3px 6px; background: #cfd6dd; font-size: 6px; }
    .find { display: flex; align-items: center; height: 14px; margin: 0 3px 6px 3px; padding: 0 3px 0 4px; background: #fff; }
    .find input { flex: 1; }
    .live { display: block; width: calc(100% - 6px); height: 17px; margin: 0 3px 6px 3px; padding-left: 6px; border-radius: 2px; background: #fff; color: var(--ink); font-weight: 700; text-align: left; }
    .sport { display: flex; align-items: center; gap: 3px; width: 100%; height: 20px; padding: 0 3px; border-bottom: 1px solid #8a97a3; }
    .sport:last-child { height: 18px; border: 0; }
    .sport svg:last-child { margin-left: auto; }
    ul { padding: 5px 0 2px 4px; }
    li { line-height: 11px; }
  `];
  render() {
    const sport = (icon: unknown, name: string, dir: "up" | "down") => html`<button class="sport">${icon}<span>${name}</span>${chevron(dir, 7)}</button>`;
    return html`
      <label class="find"><input aria-label="Ara" placeholder="Maç Kodu, Takım Adı, Lig Ara">${lens(7)}</label>
      <button class="live">CANLI BAHİS</button>
      ${sport(ball(10), "Futbol", "up")}
      <ul>${leagues.map((l) => html`<li><a href="#lig">${l}</a></li>`)}</ul>
      ${sport(basket, "Basketbol", "down")}${sport(tennis, "Tenis", "down")}${sport(volley, "Voleybol", "down")}`;
  }
}

/* ---------- showcase ---------- */

@customElement("app-root")
class AppRoot extends LitElement {
  static styles = [base, css`
    :host { min-height: 100vh; background: #fff; }
    main {
      display: grid; align-items: start; overflow: hidden; min-height: 100vh;
      grid-template-columns: minmax(0, 12fr) minmax(0, 336fr) minmax(0, 36fr) minmax(0, 161fr) minmax(0, 25fr) minmax(0, 255fr) minmax(0, 51fr) minmax(0, 648fr) minmax(0, 58fr) minmax(0, 302fr) minmax(0, 24fr) minmax(0, 66fr) minmax(0, 58fr) minmax(0, 369fr) minmax(0, 41fr);
    }
    main > * { grid-row: 1; }
    .desk { grid-column: 2 / 3; display: grid; gap: 42px; padding-top: 180px; }
    .home { grid-column: 4 / 6; margin-top: 12px; }
    .coupon { grid-column: 5 / 7; margin-top: 120px; }
    .popular { grid-column: 8 / 9; display: grid; gap: 18px; padding-top: 233px; }
    .matches { grid-column: 10 / 11; margin-top: 12px; }
    .program { grid-column: 13 / 15; margin-top: 232px; }
    .league { grid-column: 12 / 14; margin-top: 370px; }
  `];
  render() {
    return html`<main>
      <div class="desk"><odds-board></odds-board><stats-board></stats-board></div>
      <home-board class="home"></home-board>
      <coupon-board class="coupon"></coupon-board>
      <div class="popular"><played-board></played-board><featured-board></featured-board></div>
      <matches-board class="matches"></matches-board>
      <program-board class="program"></program-board>
      <league-board class="league"></league-board>
    </main>`;
  }
}
